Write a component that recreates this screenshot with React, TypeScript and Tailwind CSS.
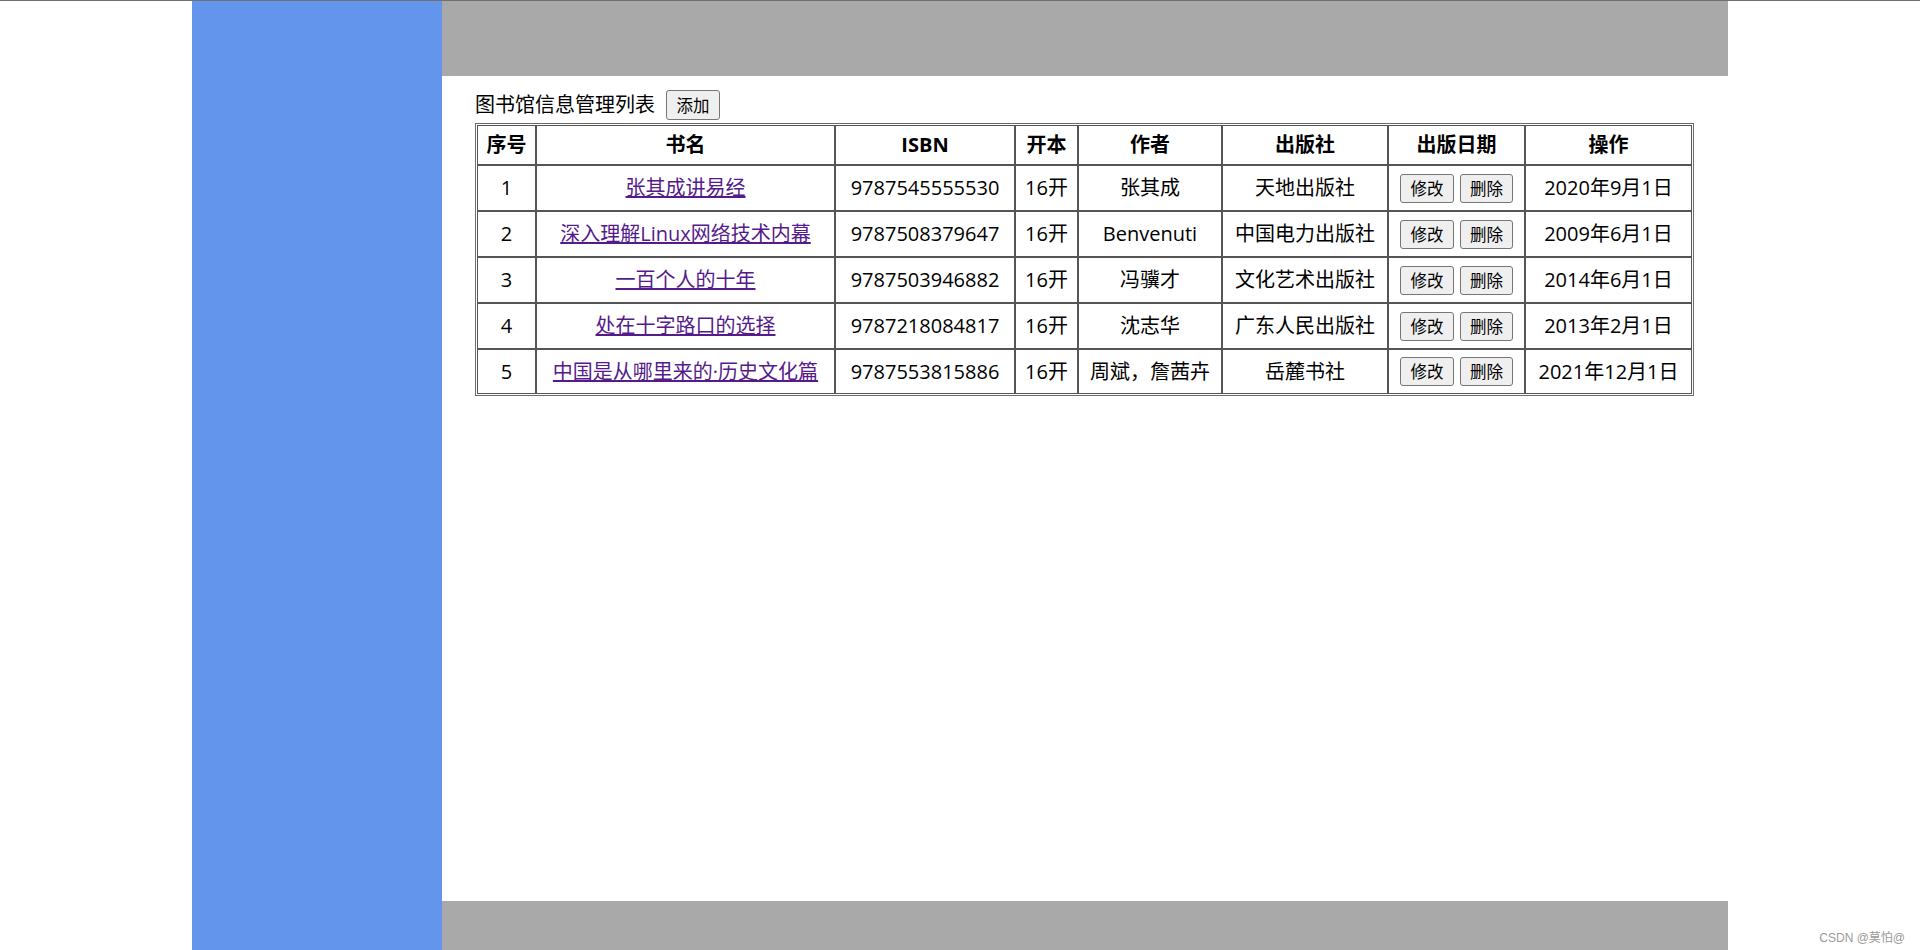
import React from "react";

type Book = {
  id: number;
  name: string;
  isbn: string;
  format: string;
  author: string;
  publisher: string;
  date: string;
};

const books: Book[] = [
  { id: 1, name: "张其成讲易经", isbn: "9787545555530", format: "16开", author: "张其成", publisher: "天地出版社", date: "2020年9月1日" },
  { id: 2, name: "深入理解Linux网络技术内幕", isbn: "9787508379647", format: "16开", author: "Benvenuti", publisher: "中国电力出版社", date: "2009年6月1日" },
  { id: 3, name: "一百个人的十年", isbn: "9787503946882", format: "16开", author: "冯骥才", publisher: "文化艺术出版社", date: "2014年6月1日" },
  { id: 4, name: "处在十字路口的选择", isbn: "9787218084817", format: "16开", author: "沈志华", publisher: "广东人民出版社", date: "2013年2月1日" },
  { id: 5, name: "中国是从哪里来的·历史文化篇", isbn: "9787553815886", format: "16开", author: "周斌，詹茜卉", publisher: "岳麓书社", date: "2021年12月1日" },
];

const font = { fontFamily: '"Open Sans", "Noto Sans CJK SC", sans-serif' };

function Btn({ label, w = "w-[54px]", h = "h-[29px]" }: { label: string; w?: string; h?: string }) {
  return (
    <button
      className={`${w} ${h} inline-flex items-center justify-center bg-[#efefef] border border-[#767676] rounded-[3px] text-[16.5px] leading-none text-black`}
      style={{ fontFamily: '"Noto Sans CJK SC", sans-serif' }}
    >
      {label}
    </button>
  );
}

export default function App() {
  const th = "border border-[#555] font-bold text-center align-middle h-[40px] p-0 whitespace-nowrap";
  const td = "border border-[#555] text-center align-middle p-0 whitespace-nowrap";
  return (
    <div className="relative w-[1920px] h-[950px] bg-white border-t border-[#707070] overflow-hidden text-black" style={font}>
      <div className="mx-auto w-[1536px] h-[949px] flex">
        <aside className="w-[250px] bg-[#6495ED]" />
        <div className="flex-1 flex flex-col">
          <header className="h-[75px] bg-[#A9A9A9]" />
          <main className="flex-1 pl-[33px] pt-[14px]">
            <div className="flex items-center gap-[11px] h-[30px] mb-[3px]">
              <span className="text-[20px] leading-none">图书馆信息管理列表</span>
              <Btn label="添加" h="h-[30px]" />
            </div>
            <div className="w-[1219px] border border-[#6b6b6b] p-px">
              <table className="w-full table-fixed border-separate border-spacing-0 text-[20px]">
                <colgroup>
                  <col className="w-[59px]" />
                  <col className="w-[299px]" />
                  <col className="w-[180px]" />
                  <col className="w-[63px]" />
                  <col className="w-[144px]" />
                  <col className="w-[166px]" />
                  <col className="w-[137px]" />
                  <col className="w-[167px]" />
                </colgroup>
                <thead>
                  <tr>
                    <th className={th}>序号</th>
                    <th className={th}>书名</th>
                    <th className={th}>ISBN</th>
                    <th className={th}>开本</th>
                    <th className={th}>作者</th>
                    <th className={th}>出版社</th>
                    <th className={th}>出版日期</th>
                    <th className={th}>操作</th>
                  </tr>
                </thead>
                <tbody>
                  {books.map((b, i) => (
                    <tr key={b.id} className={i === books.length - 1 ? "h-[45px]" : "h-[46px]"}>
                      <td className={td}>{b.id}</td>
                      <td className={td}>
                        <a href="#" className="text-[#551A8B] underline">{b.name}</a>
                      </td>
                      <td className={td}>{b.isbn}</td>
                      <td className={td}>{b.format}</td>
                      <td className={td}>{b.author}</td>
                      <td className={td}>{b.publisher}</td>
                      <td className={td}>
                        <div className="flex items-center justify-center gap-[6px]">
                          <Btn label="修改" />
                          <Btn label="删除" w="w-[53px]" />
                        </div>
                      </td>
                      <td className={td}>{b.date}</td>
                    </tr>
                  ))}
                </tbody>
              </table>
            </div>
          </main>
          <footer className="h-[49px] bg-[#A9A9A9]" />
        </div>
      </div>
      <div
        className="absolute right-[15px] bottom-[6px] text-[12px] leading-none text-[#9a9a9a]"
        style={{ fontFamily: '"Liberation Sans", "Noto Sans CJK SC", sans-serif' }}
      >
        CSDN @莫怕@
      </div>
    </div>
  );
}
